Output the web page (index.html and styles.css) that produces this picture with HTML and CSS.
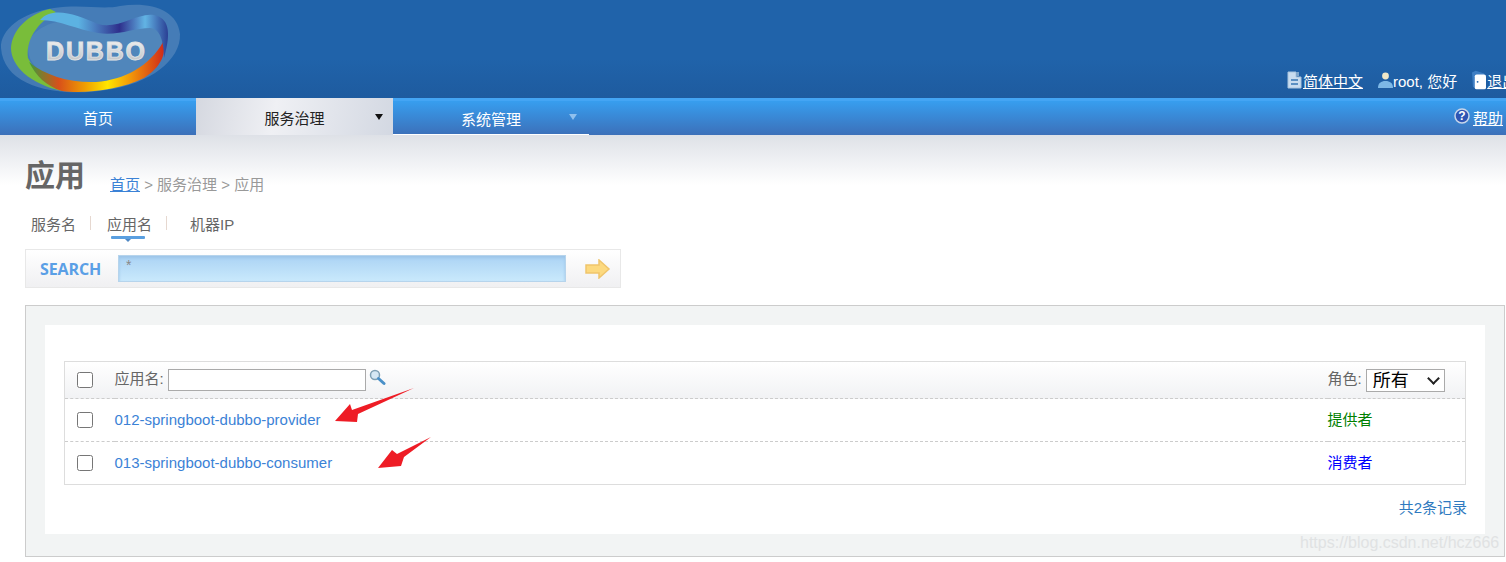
FILE: index.html
```html
<!DOCTYPE html>
<html lang="zh">
<head>
<meta charset="utf-8">
<title>Dubbo Admin</title>
<link rel="stylesheet" href="styles.css">
</head>
<body>
<header class="header">
  <svg class="logo" width="182" height="98" viewBox="0 0 182 98">
    <defs>
      <linearGradient id="bot" x1="0" x2="1" y1="0" y2="0">
        <stop offset="0" stop-color="#3f9a3c"/>
        <stop offset=".22" stop-color="#d8501a"/>
        <stop offset=".42" stop-color="#f0a000"/>
        <stop offset=".58" stop-color="#ffe600"/>
        <stop offset=".78" stop-color="#ef8a0a"/>
        <stop offset="1" stop-color="#cf2a1a"/>
      </linearGradient>
      <linearGradient id="top" x1="0" x2="1" y1="0" y2="0">
        <stop offset="0" stop-color="#5cb2e2"/>
        <stop offset=".3" stop-color="#5cb2e2"/>
        <stop offset=".62" stop-color="#2e2f8c"/>
        <stop offset=".82" stop-color="#62b4e4"/>
        <stop offset="1" stop-color="#2a3f94"/>
      </linearGradient>
      <linearGradient id="txt" x1="0" x2="0" y1="0" y2="1">
        <stop offset="0" stop-color="#f6f6f6"/>
        <stop offset="1" stop-color="#b8bcc0"/>
      </linearGradient>
    </defs>
    <path d="M1 48C0 30 22 12 54 8C84 4 102 10 120 6C150 1 178 10 180 34C181 60 150 84 106 90C64 97 4 90 1 48Z" fill="#6a95c4" opacity=".5"/>
    <path d="M28 48C28 28 60 16 82 22C102 28 120 24 138 24C158 24 166 36 161 50C154 70 118 84 80 82C48 80 28 68 28 48Z" fill="#5086bb"/>
    <path d="M50 9C28 14 12 30 11 48C11 66 30 84 62 91L52 84C42 78 34 70 28 58C26 40 36 24 56 12Z" fill="#79bd3a"/>
    <path d="M29 62C46 76 70 83 96 82C124 80 150 66 163 42C167 54 160 68 144 78C120 90 84 94 62 91C46 86 36 76 29 62Z" fill="url(#bot)"/>
    <path d="M40 20C52 6 76 14 98 24C118 30 138 12 154 15C168 18 172 30 164 58C164 42 160 28 150 28C134 28 118 36 98 33C78 30 60 20 40 20Z" fill="url(#top)"/>
    <text class="logo-text" x="46" y="60" textLength="99" fill="url(#txt)" stroke="#e2e4e6" stroke-width=".8">DUBBO</text>
  </svg>
  <nav class="user">
    <svg class="uicon" width="15" height="18" viewBox="0 0 15 18"><path d="M1 1h8v5h5v11H1z" fill="#c9dcef" stroke="#a8c4de"/><path d="M9 1h3v4H9z" fill="#7fa6cc"/><path d="M4 9h7M4 13h7" stroke="#5b8fc2" stroke-width="2"/></svg>
    <a class="ulink" href="#">简体中文</a>
    <svg class="uicon gap-l" width="15" height="18" viewBox="0 0 15 18"><circle cx="7.5" cy="5" r="3.4" fill="#f0e8c8"/><path d="M0 17c0-5 3-7 7.5-7s7.500 2 7.500 7z" fill="#7db8e6"/></svg>
    <span class="uname">root, 您好</span>
    <svg class="uicon gap-l2" width="14" height="22" viewBox="0 0 15 22"><path d="M0 3l4-2 9 3v16H3l-2-2z" fill="#3f7fc4"/><rect x="3" y="5" width="12" height="16" rx="2" fill="#fff"/><circle cx="6" cy="13" r="1" fill="#2063aa"/></svg>
    <a class="ulink" href="#">退出</a>
  </nav>
</header>
<nav class="menu">
  <a class="mitem home" href="#">首页</a>
  <a class="mitem active" href="#"><span>服务治理</span><i class="caret dark"></i></a>
  <a class="mitem sys" href="#"><span>系统管理</span><i class="caret"></i></a>
  <a class="help" href="#"><svg width="16" height="16" viewBox="0 0 16 16"><circle cx="8" cy="8" r="7" fill="#2f55b4" stroke="#c8d6ea" stroke-width="1.500"/><text class="qm" x="8" y="12" text-anchor="middle" fill="#fff">?</text></svg><u>帮助</u></a>
</nav>
<main class="main">
  <div class="title-row">
    <h1>应用</h1>
    <p class="crumbs"><a href="#">首页</a> &gt; 服务治理 &gt; 应用</p>
  </div>
  <div class="tabs">
    <span class="tab">服务名</span><i class="sep"></i>
    <span class="tab current">应用名</span><i class="sep"></i>
    <span class="tab ip">机器IP</span>
  </div>
  <form class="search">
    <span class="search-label">SEARCH</span>
    <input class="search-input" type="text" value="*">
    <svg class="search-go" width="26" height="20" viewBox="0 0 26 20"><path d="M1 6h13V1l10 9-10 9v-5H1z" fill="#fcd97f" stroke="#efc56c" stroke-width="1.500"/></svg>
  </form>
  <section class="panel">
    <div class="inner">
      <table class="list">
        <tr class="head">
          <td class="c-check"><input type="checkbox"></td>
          <td class="c-name"><span class="flt">应用名:</span><input class="flt-input" type="text"><svg class="mag" width="17" height="17" viewBox="0 0 17 17"><circle cx="6" cy="6" r="4.500" fill="#d6e8f4" stroke="#7fa0b4" stroke-width="1.500"/><path d="M9.500 9.500l5.500 5" stroke="#4a90c8" stroke-width="3" stroke-linecap="round"/></svg></td>
          <td class="c-role"><span class="flt">角色:</span><span class="select-wrap"><select class="role-select"><option>所有</option></select></span></td>
        </tr>
        <tr class="row">
          <td class="c-check"><input type="checkbox"></td>
          <td class="c-name"><a href="#">012-springboot-dubbo-provider</a></td>
          <td class="c-role provider">提供者</td>
        </tr>
        <tr class="row">
          <td class="c-check"><input type="checkbox"></td>
          <td class="c-name"><a href="#">013-springboot-dubbo-consumer</a></td>
          <td class="c-role consumer">消费者</td>
        </tr>
      </table>
      <p class="total">共2条记录</p>
    </div>
  </section>
</main>
<svg class="arrows" width="100" height="82" viewBox="0 0 100 82">
  <path d="M1 33L16 16L18 22L80 0L24 26L23 34Z" fill="#ee1c25"/>
  <path d="M44 80L58 62L63 66L97 49L70 69L67 78Z" fill="#ee1c25"/>
</svg>
<span class="watermark">https://blog.csdn.net/hcz666</span>
</body>
</html>
```
FILE: styles.css
```css
* { box-sizing: border-box; }
html, body { margin: 0; padding: 0; height: 562px; overflow: hidden; background: #fff; }
body { position: relative; width: 1506px; font-family: "Liberation Sans", "Noto Sans CJK SC", sans-serif; font-size: 15px; color: #666; }
a { color: #3b82d6; }

.header { height: 98px; background: linear-gradient(#2063aa 60%, #1e5b9f); display: flex; align-items: flex-end; overflow: hidden; }
.logo { flex: none; display: block; align-self: flex-start; }
.logo-text { font-family: "Liberation Sans", sans-serif; font-weight: bold; font-size: 25px; }
.user { margin-left: 1105px; margin-bottom: 4px; flex: none; width: 219px; height: 28px; display: flex; align-items: center; color: #fff; white-space: nowrap; }
.uicon { flex: none; display: block; }
.ulink { color: #fff; text-decoration: underline; margin-left: 1px; }
.uname { margin-left: 0; }
.gap-l { margin-left: 15px; }
.gap-l2 { margin-left: 15px; }

.menu { height: 37px; display: flex; border-top: 3px solid #44a5f4; background: linear-gradient(#379eef, #3c70b9); }
.mitem { width: 197px; flex: none; display: flex; align-items: center; justify-content: center; color: #fff; text-decoration: none; position: relative; }
.mitem.home { width: 196px; padding-bottom: 2px; }
.mitem.active { margin-top: -3px; padding-top: 2px; background: linear-gradient(100deg, #d5d8e0, #eff0f4 40%, #d3d8e2); color: #222; }
.mitem.sys { width: 196px; border-bottom: 1px solid #fff; padding-top: 2px; }
.caret { position: absolute; right: 12px; top: 13px; width: 0; height: 0; border: 4px solid transparent; border-top: 6px solid #8fc0ee; border-bottom: 0; }
.caret.dark { right: 10px; top: 16px; border-top-color: #111; }
.help { margin-left: auto; margin-right: 3px; color: #fff; display: flex; align-items: center; gap: 3px; padding-bottom: 2px; }
.help svg { display: block; margin-bottom: 3px; }
.qm { font-size: 12px; font-weight: bold; font-family: "Liberation Sans", sans-serif; }

.main { background: linear-gradient(#dee1e7, #fff 50px) no-repeat; padding: 21px 0 0 25px; }
.title-row { display: flex; align-items: flex-end; height: 40px; }
h1 { margin: 0; font-size: 30px; line-height: 40px; font-weight: bold; color: #666; }
.crumbs { margin: 0 0 0 25px; line-height: 20px; padding-bottom: 1px; color: #999; }
.tabs { display: flex; align-items: center; height: 24px; margin-top: 15px; padding-left: 6px; }
.tab { color: #666; position: relative; white-space: nowrap; }
.tab.current::before { content: ""; position: absolute; left: 4px; width: 34px; top: 23px; height: 3px; background: #5a9fe0; border-radius: 1px; }
.tab.current::after { content: ""; position: absolute; left: 18px; top: 26px; border: 3px solid transparent; border-top: 3px solid #4f87c4; border-bottom: 0; }
.tab.ip { margin-left: 7px; }
.sep { width: 1px; height: 14px; background: #e6d8d0; margin: 0 16px 0 14px; }
.search { width: 596px; height: 39px; margin-top: 14px; display: flex; align-items: center; border: 1px solid #e8e8e8; background: linear-gradient(#fff, #f0f0f2); padding-left: 14px; }
.search-label { color: #5a9fe6; font-weight: bold; font-size: 16px; width: 78px; font-family: "Open Sans", sans-serif; letter-spacing: -.1px; }
.search-input { width: 448px; height: 27px; border: 1px solid #b6d4ec; box-shadow: inset 0 2px 3px #9cc4e8; background: linear-gradient(#abd3f4, #c9e9fc); padding: 0 0 8px 7px; font-size: 14px; color: #888; outline: 0; }
.search-go { margin-left: 19px; display: block; flex: none; }

.panel { width: 1480px; height: 252px; margin-top: 17px; border: 1px solid #ccc; background: #f2f4f4; padding: 19px; }
.inner { background: #fff; height: 209px; padding: 36px 19px 0; }
.list { width: 1402px; height: 124px; border-collapse: collapse; border: 1px solid #ddd; }
.list td { padding: 0; vertical-align: middle; line-height: 20px; }
.list input[type=checkbox] { width: 16px; height: 16px; margin: 0; display: block; }
.head { height: 37px; background: linear-gradient(#fff, #f1f2f4); }
.row { height: 43px; border-top: 1px dashed #ccc; }
.c-check { width: 50px; padding-left: 12px !important; }
.c-name { color: #666; }
.c-name a { text-decoration: none; }
.c-role { width: 138px; white-space: nowrap; }
.flt { color: #666; }
.flt-input { width: 198px; height: 22px; margin-left: 4px; border: 1px solid #aaa; vertical-align: middle; background: #fff; }
.mag { margin-left: 3px; vertical-align: middle; position: relative; top: -3px; }
.select-wrap { display: inline-block; position: relative; width: 79px; height: 23px; margin-left: 4px; vertical-align: middle; }
.select-wrap::after { content: ""; position: absolute; right: 7px; top: 5px; width: 7px; height: 7px; border-right: 2px solid #222; border-bottom: 2px solid #222; transform: rotate(45deg); pointer-events: none; }
.role-select { appearance: none; display: block; width: 79px; height: 23px; border: 1px solid #aaa; border-radius: 0; background: #fff; color: #000; font-size: 18px; line-height: 19px; font-family: "Noto Sans CJK SC", sans-serif; padding: 0 0 3px 6px; }
.provider { color: #008000; }
.consumer { color: #0000ff; }
.total { margin: 13px 0 0; text-align: right; width: 1403px; color: #2f7ac0; line-height: 20px; }

.arrows { position: absolute; left: 334px; top: 388px; }
.watermark { position: absolute; left: 1300px; top: 534px; font-size: 16px; color: #e0e2e3; white-space: nowrap; }
```
